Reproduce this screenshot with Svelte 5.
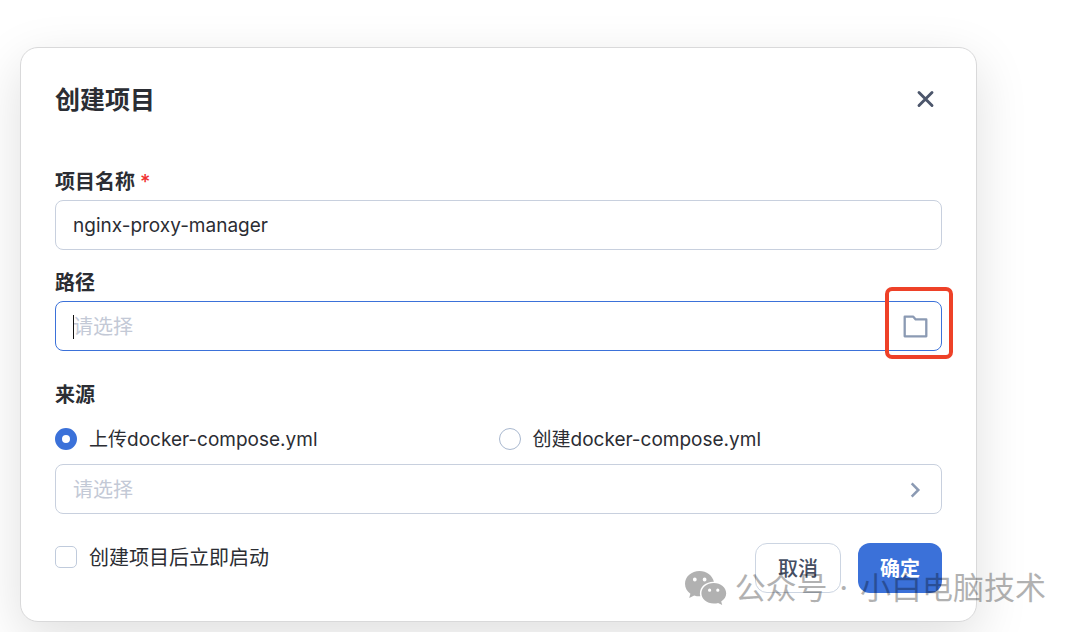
<script>
  let name = $state('nginx-proxy-manager');
  let path = $state('');
  let file = $state('');
  let source = $state('upload');
  let startNow = $state(false);
</script>

<main class="page">
  <form class="dialog" aria-labelledby="dialog-title" onsubmit={(e) => e.preventDefault()}>
    <header class="header">
      <h1 id="dialog-title">创建项目</h1>
      <button class="icon-button" type="button" aria-label="关闭">
        <svg width="20" height="20" viewBox="0 0 20 20" fill="none" stroke="#4c566b" stroke-width="2.9" stroke-linecap="round">
          <path d="M4 3.500l13 13M17 3.500l-13 13" />
        </svg>
      </button>
    </header>

    <div class="field">
      <label class="caption" for="name">项目名称 <span class="required">*</span></label>
      <div class="control">
        <input id="name" class="text latin" type="text" bind:value={name} />
      </div>
    </div>

    <div class="field path-field">
      <label class="caption" for="path">路径</label>
      <div class="control active">
        <input id="path" class="text" type="text" placeholder="请选择" bind:value={path} />
        <span class="caret"></span>
        <button class="icon-button" type="button" aria-label="选择文件夹">
          <svg width="26" height="24" viewBox="0 0 26 24" fill="none" stroke="#8b9ab3" stroke-width="2.3" stroke-linejoin="round">
            <path d="M1.700 1.700h8.600l2.400 2.700h10.600v16.900H1.700z" />
          </svg>
        </button>
        <span class="highlight"></span>
      </div>
    </div>

    <fieldset class="source">
      <legend class="caption">来源</legend>
      <div class="options latin">
        <label class="choice">
          <input type="radio" name="source" value="upload" bind:group={source} />
          <span>上传docker-compose.yml</span>
        </label>
        <label class="choice">
          <input type="radio" name="source" value="create" bind:group={source} />
          <span>创建docker-compose.yml</span>
        </label>
      </div>
      <div class="control">
        <input class="text" type="text" placeholder="请选择" aria-label="选择文件" bind:value={file} />
        <button class="icon-button" type="button" aria-label="浏览">
          <svg width="18" height="18" viewBox="0 0 18 18" fill="none" stroke="#8b9ab3" stroke-width="2.5">
            <path d="M4.700 2.400l6.600 6.600-6.600 6.600" />
          </svg>
        </button>
      </div>
    </fieldset>

    <footer class="footer">
      <label class="choice">
        <input type="checkbox" bind:checked={startNow} />
        <span>创建项目后立即启动</span>
      </label>
      <div class="actions">
        <button class="button" type="button">取消</button>
        <button class="button primary" type="submit">确定</button>
      </div>
    </footer>
  </form>

  <div class="watermark">
    <svg width="42" height="34" viewBox="0 0 42 34">
      <path fill-rule="evenodd" fill="currentColor" d="M14.500 0C6.500 0 0 5.600 0 12.800c0 4.100 2.100 7.600 5.400 9.900L4.200 27l5-2.600c1.700.6 3.500.8 5.300.8h.8a11.500 11.500 0 0 1-.4-2.900c0-6.500 6-11.500 13.300-11.500h.7C27.500 4.500 21.500 0 14.500 0zM9.800 6.600a1.900 1.900 0 1 1 0 3.800 1.900 1.900 0 0 1 0-3.800zm9.800 0a1.900 1.900 0 1 1 0 3.800 1.900 1.900 0 0 1 0-3.800z" />
      <path fill-rule="evenodd" fill="currentColor" d="M28.800 12c-6.900 0-12.400 4.600-12.400 10.300s5.500 10.300 12.400 10.300c1.500 0 3-.2 4.300-.6l4.100 2-1-3.500c3.100-1.900 5-4.800 5-8.200C41.200 16.600 35.700 12 28.800 12zm-4.200 5.600a1.600 1.600 0 1 1 0 3.200 1.600 1.600 0 0 1 0-3.200zm8.200 0a1.600 1.600 0 1 1 0 3.200 1.600 1.600 0 0 1 0-3.200z" />
    </svg>
    <span>公众号 <span class="dot">·</span> 小白电脑技术</span>
  </div>
</main>

<style>
  :global(body) {
    margin: 0;
    background: #fff;
  }

  .page {
    position: relative;
    box-sizing: border-box;
    padding: 47px 103px 10px 20px;
    overflow: hidden;
    color: #2b2d33;
    font-family: Inter, "Noto Sans CJK SC", sans-serif;
    font-size: 20px;
    line-height: 24px;
  }

  .dialog {
    padding: 33px 34px 28px;
    border: 1px solid #d9d9da;
    border-radius: 18px;
    background: #fff;
    box-shadow: 0 16px 52px rgba(0, 0, 0, 0.13);
  }

  .header,
  .footer,
  .actions,
  .control,
  .choice {
    display: flex;
    align-items: center;
  }

  .header {
    justify-content: space-between;
    margin-bottom: 53px;
    padding-right: 7px;
  }

  h1 {
    margin: 0;
    padding-top: 2px;
    font-size: 25px;
    font-weight: 600;
    line-height: 34px;
  }

  .latin,
  .text.latin {
    font-size: 19px;
  }

  .icon-button {
    display: flex;
    padding: 0;
    border: 0;
    background: none;
    cursor: pointer;
  }

  .field {
    margin-bottom: 21px;
  }

  .path-field {
    margin-bottom: 32px;
  }

  .caption {
    display: block;
    margin-bottom: 6px;
    padding: 0;
    font-weight: 600;
  }

  .required {
    color: #f03030;
    font-weight: 500;
  }

  .control {
    position: relative;
    box-sizing: border-box;
    height: 50px;
    padding: 2px 16px 0 17px;
    border: 1px solid #c8d0de;
    border-radius: 8px;
  }

  .control.active {
    padding-right: 12px;
    border-color: #3b71d9;
  }

  .text {
    flex: 1;
    min-width: 0;
    padding: 0;
    border: 0;
    outline: 0;
    background: none;
    color: inherit;
    font: inherit;
  }

  .text::placeholder {
    color: #c3c9d6;
    opacity: 1;
  }

  .caret {
    position: absolute;
    left: 17px;
    top: 13px;
    width: 1px;
    height: 24px;
    background: #111;
  }

  .highlight {
    position: absolute;
    top: -15px;
    right: -12px;
    bottom: -9px;
    width: 60px;
    border: 4px solid #ee4128;
    border-radius: 7px;
    pointer-events: none;
  }

  .source {
    min-width: 0;
    margin: 0 0 29px;
    padding: 0;
    border: 0;
  }

  .source .caption {
    margin-bottom: 19px;
  }

  .options {
    display: grid;
    grid-template-columns: 1fr 1fr;
    margin-bottom: 12px;
  }

  .choice {
    gap: 12px;
  }

  .choice span {
    padding-top: 2px;
  }

  .choice input {
    appearance: none;
    box-sizing: border-box;
    flex: none;
    width: 22px;
    height: 22px;
    margin: 0;
    border: 1px solid #c0cbdc;
    border-radius: 5px;
    background: #fff;
  }

  .choice input[type="radio"] {
    border-color: #a9b8cf;
    border-radius: 50%;
  }

  .choice input[type="radio"]:checked {
    border: 7px solid #3b71d9;
  }

  .choice input[type="checkbox"]:checked {
    background: #3b71d9;
  }

  .footer {
    align-items: flex-start;
    justify-content: space-between;
  }

  .footer .choice {
    min-height: 28px;
  }

  .actions {
    gap: 17px;
  }

  .button {
    height: 50px;
    padding: 2px 22px 0;
    border: 1px solid #ccd5e2;
    border-radius: 12px;
    background: #fff;
    color: #454e62;
    font: inherit;
    font-weight: 500;
    cursor: pointer;
  }

  .button.primary {
    border: 0;
    background: #3b71d9;
    color: #fff;
    font-weight: 600;
  }

  .watermark {
    position: absolute;
    right: 34px;
    bottom: 22px;
    display: flex;
    align-items: center;
    gap: 8px;
    color: #000;
    font-size: 31px;
    font-weight: 400;
    line-height: 44px;
    opacity: 0.3;
  }

  .dot {
    margin: 0 3px;
  }
</style>
